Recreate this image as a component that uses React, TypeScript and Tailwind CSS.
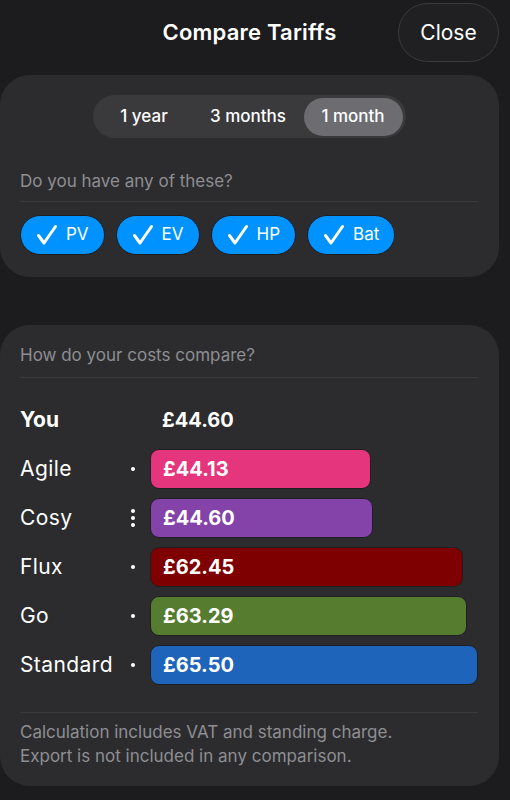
import React from 'react';

interface Tariff {
  name: string;
  price: number;
  color: string;
  dots: number;
}

const tariffs: Tariff[] = [
  { name: 'Agile', price: 44.13, color: 'bg-[#e4357d]', dots: 1 },
  { name: 'Cosy', price: 44.6, color: 'bg-[#8443a9]', dots: 3 },
  { name: 'Flux', price: 62.45, color: 'bg-[#7f0000]', dots: 1 },
  { name: 'Go', price: 63.29, color: 'bg-[#557c2f]', dots: 1 },
  { name: 'Standard', price: 65.5, color: 'bg-[#1e64ba]', dots: 1 },
];

const MAX_BAR = 328;

const Check = () => (
  <svg width="22" height="22" viewBox="0 0 22 22" fill="none">
    <polyline
      points="2.5,11.5 8,19 19.5,2.5"
      stroke="white"
      strokeWidth="3"
      strokeLinecap="round"
      strokeLinejoin="round"
    />
  </svg>
);

const Chip = ({ label }: { label: string }) => (
  <div className="h-[40px] flex items-center gap-[8px] pl-[15px] pr-[15px] rounded-full bg-[#0092ff] border border-[#1d1d1f] text-white text-[17px]">
    <Check />
    <span>{label}</span>
  </div>
);

const Dots = ({ count }: { count: number }) => (
  <div className="w-[14px] flex flex-col items-center justify-center gap-[3px]">
    {Array.from({ length: count }).map((_, i) => (
      <span key={i} className="block w-[4px] h-[4px] rounded-full bg-white" />
    ))}
  </div>
);

const App = () => {
  const max = Math.max(...tariffs.map((t) => t.price));

  return (
    <div className="w-[510px] h-[800px] bg-[#1c1c1e] text-white font-['Inter',sans-serif] overflow-hidden">
      <div className="w-[499px]">
        {/* header */}
        <div className="pt-[3px] grid grid-cols-[1fr_auto_1fr] items-center h-[62px]">
          <div />
          <h1 className="text-[22px] font-semibold tracking-[0.2px]">Compare Tariffs</h1>
          <div className="flex justify-end">
            <button className="w-[101px] h-[59px] rounded-full bg-[#202022] border border-[#3b3b3e] text-[21px] text-white">
              Close
            </button>
          </div>
        </div>

        {/* filters card */}
        <div className="mt-[13px] rounded-[30px] bg-[#2c2c2e] pt-[20px] pb-[22px] pl-[20px] pr-[21px]">
          <div className="flex justify-center">
            <div className="flex items-center h-[43px] p-[3px] rounded-full bg-[#3a3a3d] text-[17px] font-medium">
              <div className="w-[97px] text-center">1 year</div>
              <div className="w-[111px] text-center">3 months</div>
              <div className="w-[99px] h-[38px] flex items-center justify-center rounded-full bg-[#6c6c71]">
                1 month
              </div>
            </div>
          </div>
          <div className="mt-[31px] pb-[8px] border-b border-[#3a3a3c] text-[17px] leading-[24px] text-[#8e8e93]">
            Do you have any of these?
          </div>
          <div className="mt-[13px] flex gap-[11px]">
            <Chip label="PV" />
            <Chip label="EV" />
            <Chip label="HP" />
            <Chip label="Bat" />
          </div>
        </div>

        {/* comparison card */}
        <div className="mt-[48px] rounded-[30px] bg-[#2c2c2e] pt-[18px] pb-[18px] pl-[20px] pr-[21px]">
          <div className="pb-[10px] border-b border-[#3a3a3c] text-[17px] leading-[24px] text-[#8e8e93]">
            How do your costs compare?
          </div>

          <div className="mt-[22px] flex flex-col gap-[9px]">
            <div className="h-[40px] flex items-center text-[20px] font-bold">
              <div className="w-[130px] text-[21px]">You</div>
              <div className="pl-[12px]">£44.60</div>
            </div>
            {tariffs.map((t) => (
              <div key={t.name} className="h-[40px] flex items-center">
                <div className="w-[106px] text-[21px] tracking-[0.4px]">{t.name}</div>
                <Dots count={t.dots} />
                <div
                  className={`ml-[10px] h-[40px] flex items-center pl-[12px] rounded-[9px] border border-[#1f1f21] text-[20px] font-bold ${t.color}`}
                  style={{ width: `${(t.price / max) * MAX_BAR}px` }}
                >
                  £{t.price.toFixed(2)}
                </div>
              </div>
            ))}
          </div>

          <div className="mt-[27px] pt-[7px] border-t border-[#3a3a3c] text-[17px] leading-[24px] text-[#8e8e93]">
            <p>Calculation includes VAT and standing charge.</p>
            <p>Export is not included in any comparison.</p>
          </div>
        </div>
      </div>
    </div>
  );
};

export default App;
